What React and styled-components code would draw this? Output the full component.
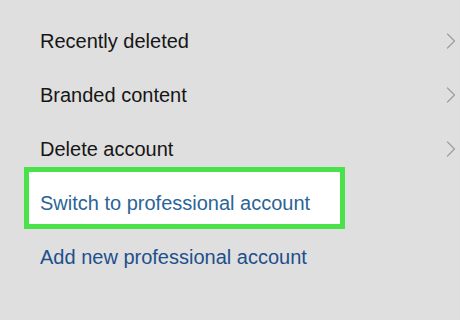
import React from "react";
import styled, { createGlobalStyle } from "styled-components";

const Global = createGlobalStyle`
  html, body { margin: 0; padding: 0; background: #dfdfdf; }
  body { font-family: "Liberation Sans", Arial, sans-serif; }
`;

const Screen = styled.div`
  width: 460px;
  height: 320px;
  background: #dfdfdf;
  padding-top: 14px;
  box-sizing: border-box;
  overflow: hidden;
`;

const List = styled.ul`
  list-style: none;
  margin: 0;
  padding: 0;
  display: flex;
  flex-direction: column;
`;

const Row = styled.li`
  position: relative;
  height: 54px;
  display: flex;
  align-items: center;
  justify-content: space-between;
  padding: 0 4px 0 40px;
  font-size: 20px;
  color: ${(p) => (p.$link ? p.$linkColor : "#161616")};
  ${(p) =>
    p.$highlight &&
    `
    &::before {
      content: "";
      position: absolute;
      left: 24px;
      top: -9px;
      width: 321px;
      height: 62px;
      box-sizing: border-box;
      border: 5px solid #4ae24a;
      background: #ffffff;
      z-index: 0;
    }
  `}
`;

const Label = styled.span`
  position: relative;
  z-index: 1;
`;

const Chevron = styled.svg`
  width: 10px;
  height: 16px;
  flex: none;
`;

const Arrow = () => (
  <Chevron viewBox="0 0 10 16">
    <path d="M1.5 1 L8.5 8 L1.5 15" fill="none" stroke="#a0a0a0" strokeWidth="1.3" strokeLinecap="round" strokeLinejoin="round" />
  </Chevron>
);

export default function App() {
  return (
    <Screen>
      <Global />
      <List>
        <Row>
          <Label>Recently deleted</Label>
          <Arrow />
        </Row>
        <Row>
          <Label>Branded content</Label>
          <Arrow />
        </Row>
        <Row>
          <Label>Delete account</Label>
          <Arrow />
        </Row>
        <Row $link $linkColor="#2b6497" $highlight>
          <Label>Switch to professional account</Label>
        </Row>
        <Row $link $linkColor="#1d4f8c">
          <Label>Add new professional account</Label>
        </Row>
      </List>
    </Screen>
  );
}
